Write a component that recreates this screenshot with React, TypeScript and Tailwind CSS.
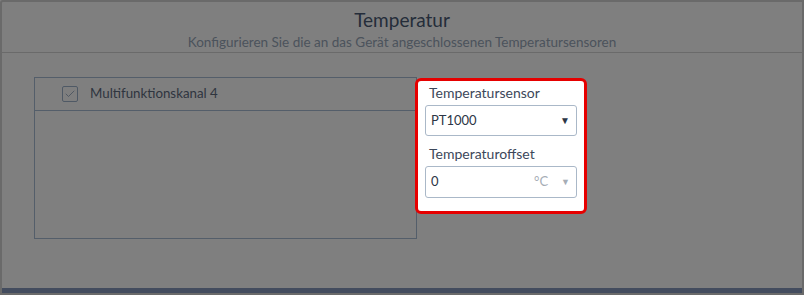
import { Check } from 'lucide-react';

export default function App() {
  return (
    <div className="relative w-[804px] h-[295px] overflow-hidden bg-white font-['Lato',sans-serif]">
      <div className="flex flex-col h-full border-2 border-[#d4d4d4] rounded-tl-[3px]">
        {/* Header */}
        <div className="h-[51px] border-b border-[#d4d4d4] flex flex-col items-center pt-[6px]">
          <h1 className="text-[19px] leading-[24px] text-[#4a5a74]">Temperatur</h1>
          <p className="text-[13.5px] leading-[18px] text-[#97a6b8] mt-[1px]">
            Konfigurieren Sie die an das Gerät angeschlossenen Temperatursensoren
          </p>
        </div>

        {/* Content */}
        <div className="flex-1 flex items-start pl-[32px] pt-[24px]">
          <div className="w-[383px] h-[162px] border border-[#a9bdd4] flex flex-col">
            <div className="h-[33px] border-b border-[#a9bdd4] flex items-center pl-[27px] gap-[12px]">
              <span className="w-[16px] h-[16px] rounded-[2px] border border-[#9fb3cb] flex items-center justify-center">
                <Check size={12} strokeWidth={1.5} className="text-[#8499b4]" />
              </span>
              <span className="text-[13.3px] text-[#5e6b7e]">Multifunktionskanal 4</span>
            </div>
          </div>

          <div className="relative z-20 -ml-[2px] mt-[1px] w-[172px] h-[136px] bg-white border-[3px] border-[#e60000] rounded-[6px] px-[7px] pt-[3px]">
            <label className="block text-[14px] leading-[18px] text-[#3c475a] pl-[4px]">Temperatursensor</label>
            <div className="mt-[3px] h-[31px] border border-[#aab8c8] rounded-[3px] flex items-center justify-between pl-[5px] pr-[6px]">
              <span className="text-[13px] text-[#2c3646]">PT1000</span>
              <span className="text-[10px] text-[#2c3646]">▼</span>
            </div>
            <label className="block mt-[9px] text-[14px] leading-[18px] text-[#3c475a] pl-[4px]">Temperaturoffset</label>
            <div className="mt-[3px] h-[32px] border border-[#aab8c8] rounded-[3px] flex items-center pl-[5px] pr-[6px]">
              <span className="flex-1 text-[13px] text-[#2c3646]">0</span>
              <span className="text-[13px] text-[#a6adb6] mr-[13px]">°C</span>
              <span className="text-[9px] text-[#a6adb6]">▼</span>
            </div>
          </div>
        </div>

        {/* Footer bar */}
        <div className="h-[5px] bg-[#8799bd]" />
      </div>

      {/* Dimming overlay */}
      <div className="absolute inset-0 z-10 bg-black/50 pointer-events-none" />
    </div>
  );
}
